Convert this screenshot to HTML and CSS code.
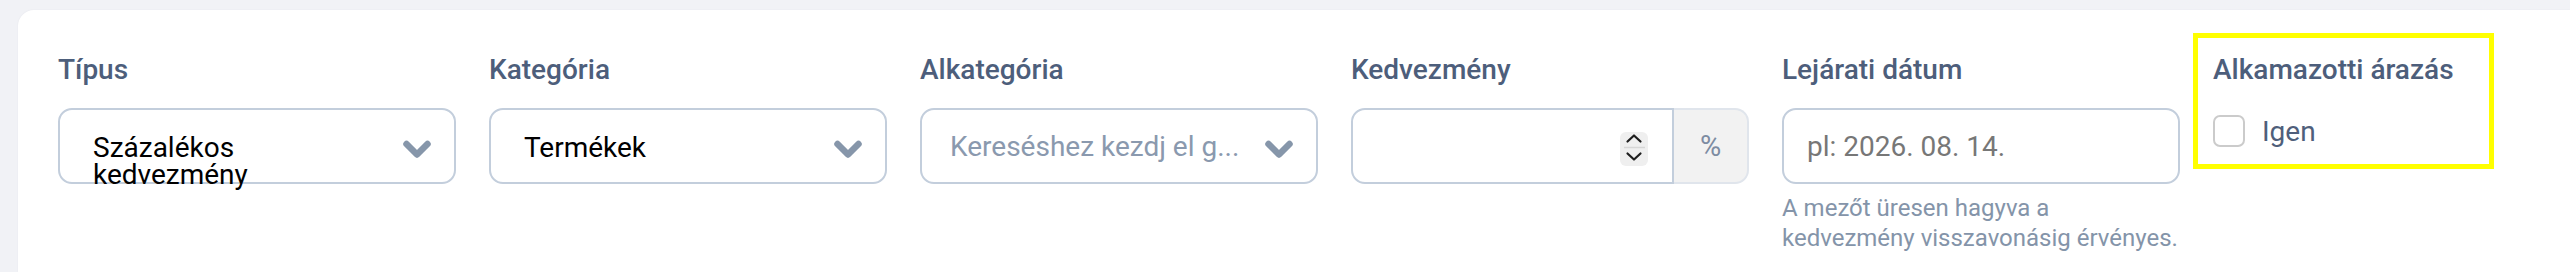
FILE: index.html
```html
<!DOCTYPE html>
<html lang="hu">
<head>
	<meta charset="UTF-8">
	<title>Kedvezmény szűrő</title>
	<link rel="stylesheet" href="styles.css">
</head>
<body>
	<div class="card">
		<div class="field">
			<label class="field-label">Típus</label>
			<div class="select">
				<span class="select-value">Százalékos kedvezmény</span>
				<svg class="chevron" viewBox="0 0 28 20"><path d="M3.5 4 L14 14.5 L24.5 4"/></svg>
			</div>
		</div>
		<div class="field">
			<label class="field-label">Kategória</label>
			<div class="select">
				<span class="select-value">Termékek</span>
				<svg class="chevron" viewBox="0 0 28 20"><path d="M3.5 4 L14 14.5 L24.5 4"/></svg>
			</div>
		</div>
		<div class="field">
			<label class="field-label">Alkategória</label>
			<div class="input input-search">
				<span class="placeholder">Kereséshez kezdj el g...</span>
				<svg class="chevron" viewBox="0 0 28 20"><path d="M3.5 4 L14 14.5 L24.5 4"/></svg>
			</div>
		</div>
		<div class="field">
			<label class="field-label">Kedvezmény</label>
			<div class="input-group">
				<div class="input input-number">
					<span class="spinner">
						<svg viewBox="0 0 28 34"><path d="M7.5 9.5 L14 3.5 L20.5 9.5"/><line class="divider" x1="4" y1="15.5" x2="25" y2="15.5"/><path d="M7.5 21.5 L14 27.5 L20.5 21.5"/></svg>
					</span>
				</div>
				<span class="addon">%</span>
			</div>
		</div>
		<div class="field">
			<label class="field-label">Lejárati dátum</label>
			<div class="input input-date">
				<span class="placeholder placeholder-date">pl: 2026. 08. 14.</span>
			</div>
			<p class="help">A mezőt üresen hagyva a kedvezmény visszavonásig érvényes.</p>
		</div>
		<div class="field field-check">
			<label class="field-label">Alkamazotti árazás</label>
			<label class="check-row">
				<input type="checkbox" class="check">
				<span>Igen</span>
			</label>
		</div>
	</div>
</body>
</html>
```

FILE: styles.css
```css
*{
	margin: 0;
	padding: 0;
	box-sizing: border-box;
}
body{
	background: #f1f2f6;
	font-family: Roboto, "Liberation Sans", sans-serif;
	overflow: hidden;
}
.card{
	display: flex;
	align-items: flex-start;
	gap: 33px;
	margin: 10px 0 0 18px;
	padding: 40px 0 0 40px;
	min-height: 262px;
	background: #fff;
	border-radius: 16px 0 0 0;
	box-shadow: 0 0 2px rgba(30,40,70,0.06);
}
.field{
	flex: none;
	width: 398px;
}
.field-label{
	display: block;
	height: 40px;
	line-height: 40px;
	font-size: 28px;
	font-weight: 500;
	color: #4d5e7b;
	margin-bottom: 18px;
	white-space: nowrap;
}
.select,.input{
	display: flex;
	align-items: flex-start;
	height: 76px;
	border: 2px solid #c3cedc;
	border-radius: 14px;
	background: #fff;
}
.select{
	padding: 24px 0 0 33px;
}
.select-value{
	flex: 1;
	max-width: 240px;
	font-size: 28px;
	line-height: 27px;
	color: #000;
}
.chevron{
	flex: none;
	width: 28px;
	height: 20px;
	margin: 6px 23px 0 auto;
}
.chevron path{
	fill: none;
	stroke: #8696aa;
	stroke-width: 6.5;
	stroke-linecap: round;
	stroke-linejoin: round;
}
.input{
	align-items: center;
}
.input-search{
	padding-left: 28px;
}
.input-search .chevron{
	margin: 8px 23px 0 auto;
}
.placeholder{
	font-size: 28px;
	color: #8a99ae;
	white-space: nowrap;
}
.input-date{
	padding-left: 23px;
}
.placeholder-date{
	color: #777;
}
.input-group{
	display: flex;
	height: 76px;
}
.input-number{
	flex: 1;
	height: 76px;
	border-radius: 14px 0 0 14px;
	justify-content: flex-end;
	padding-right: 24px;
}
.spinner{
	display: block;
	width: 28px;
	height: 34px;
	background: #efefef;
	border-radius: 6px;
	margin-top: 6px;
}
.spinner svg{
	display: block;
	width: 28px;
	height: 34px;
}
.spinner path{
	fill: none;
	stroke: #1e1e1e;
	stroke-width: 2.2;
	stroke-linecap: round;
	stroke-linejoin: round;
}
.spinner .divider{
	stroke: #d6d6d6;
	stroke-width: 1.5;
}
.addon{
	flex: none;
	width: 75px;
	display: flex;
	align-items: center;
	justify-content: center;
	background: #f2f2f2;
	border: 2px solid #e0e5ec;
	border-left: none;
	border-radius: 0 14px 14px 0;
	font-size: 29px;
	color: #7d8ca2;
}
.help{
	margin-top: 9px;
	font-size: 24px;
	line-height: 30px;
	color: #8494a9;
}
.field-check{
	margin: -12px 0 0 -15px;
	padding: 12px 15px 16px;
	width: 291px;
	outline: 5px solid #ffff00;
}
.field-check .field-label{
	margin-bottom: 24px;
}
.check-row{
	display: flex;
	align-items: center;
	gap: 17px;
	height: 34px;
	font-size: 28px;
	color: #4f5f7b;
}
.check{
	appearance: none;
	-webkit-appearance: none;
	flex: none;
	width: 32px;
	height: 32px;
	border: 2px solid #cbcbcb;
	border-radius: 7px;
	background: #fff;
}
```
